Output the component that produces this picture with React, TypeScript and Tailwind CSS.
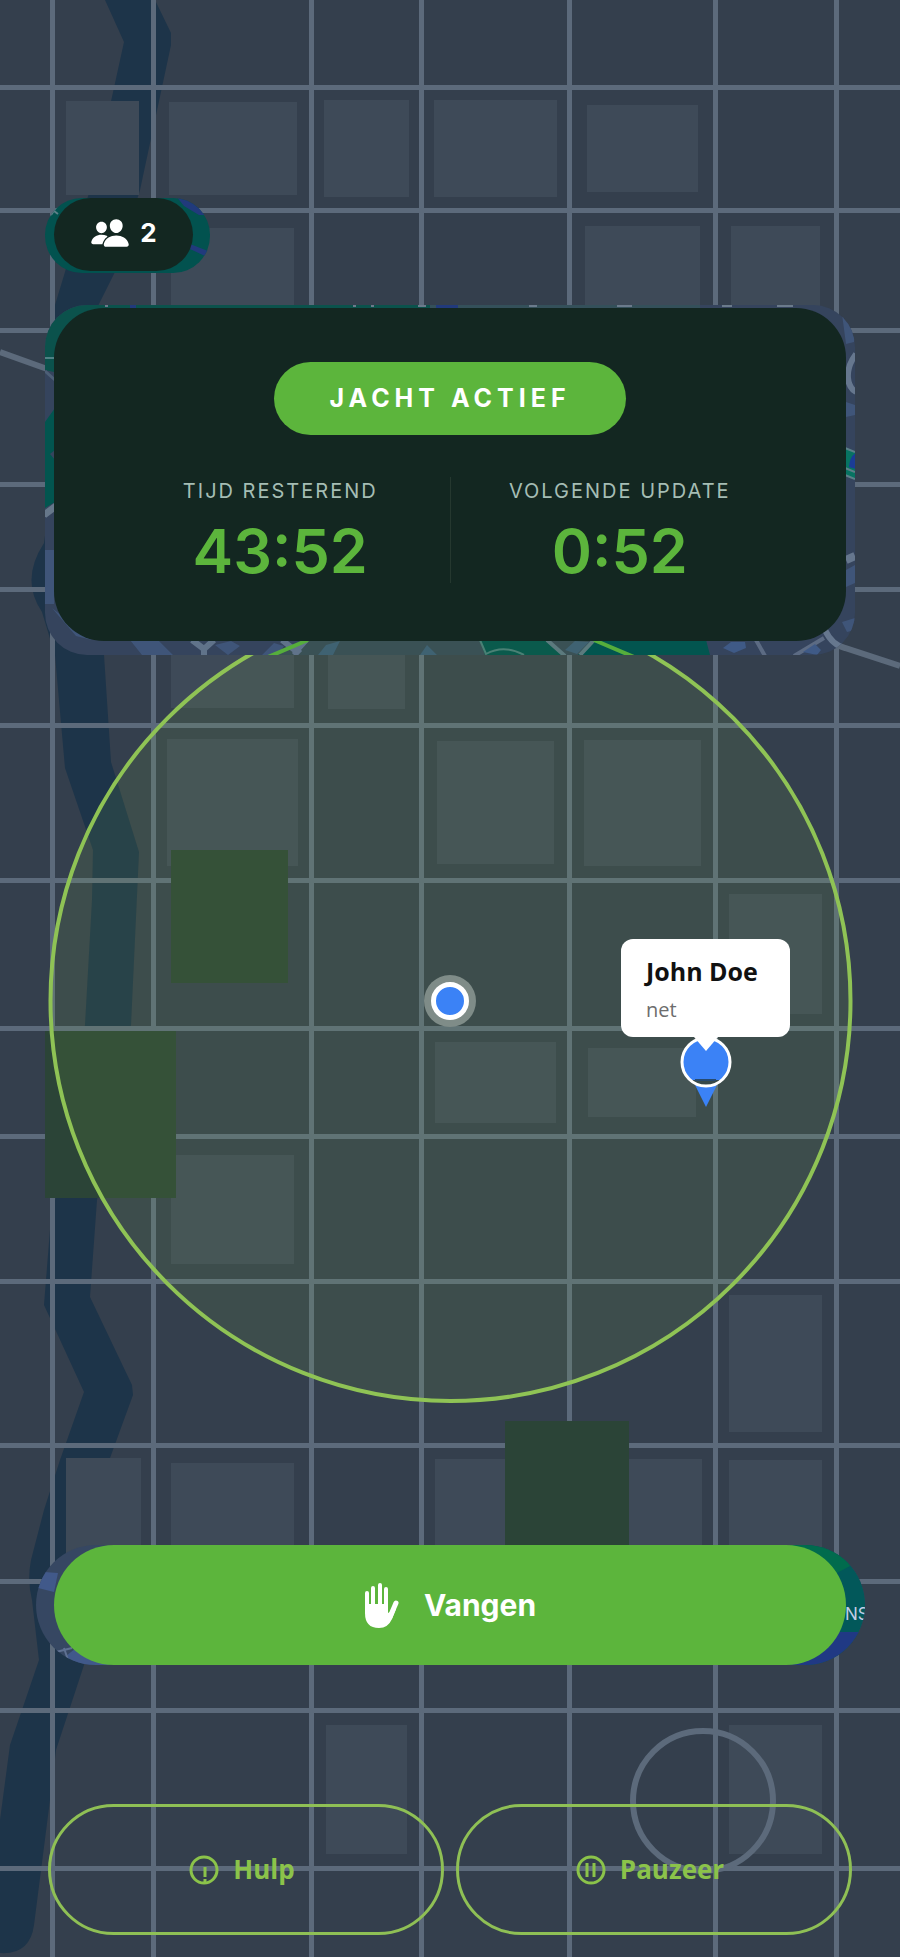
import { IoPeople } from 'react-icons/io5';

type Rect = [x: number, y: number, w: number, h: number];

const verticalRoads = [52, 153, 311, 421, 569, 715, 836];
const horizontalRoads = [87, 210, 330, 484, 589, 725, 880, 1028, 1136, 1281, 1445, 1581, 1710, 1868];

const buildings: Rect[] = [
  [66, 101, 73, 94],
  [169, 102, 128, 93],
  [324, 100, 85, 97],
  [434, 100, 123, 97],
  [587, 105, 111, 87],
  [171, 228, 123, 100],
  [585, 226, 115, 100],
  [731, 226, 89, 100],
  [171, 607, 123, 101],
  [328, 607, 77, 102],
  [167, 739, 131, 127],
  [437, 741, 117, 123],
  [584, 740, 117, 126],
  [729, 894, 93, 120],
  [435, 1042, 121, 81],
  [588, 1048, 108, 69],
  [171, 1155, 123, 109],
  [729, 1295, 93, 137],
  [66, 1458, 75, 104],
  [171, 1463, 123, 104],
  [435, 1459, 267, 104],
  [729, 1460, 93, 104],
  [326, 1725, 81, 129],
  [729, 1725, 93, 129],
];

const parks: Rect[] = [
  [171, 850, 117, 133],
  [45, 1031, 131, 167],
  [505, 1421, 124, 180],
];

function Rects({ items, fill }: { items: Rect[]; fill: string }) {
  return (
    <g fill={fill}>
      {items.map(([x, y, width, height]) => (
        <rect key={`${x}-${y}`} x={x} y={y} width={width} height={height} />
      ))}
    </g>
  );
}

function CityMap() {
  return (
    <svg
      viewBox="0 0 900 1957"
      preserveAspectRatio="xMidYMin slice"
      className="absolute inset-0 h-full w-full"
      aria-hidden="true"
    >
      <defs>
        <clipPath id="pill-edge">
          <rect x="45" y="198" width="165" height="75" rx="37" />
        </clipPath>
        <clipPath id="panel-edge">
          <rect x="45" y="305" width="810" height="350" rx="42" />
        </clipPath>
        <clipPath id="action-edge">
          <rect x="36" y="1545" width="829" height="120" rx="60" />
        </clipPath>
      </defs>

      <rect width="900" height="1957" fill="#343f4d" />

      {/* River */}
      <path
        d="M105 0 L124 42 L96 170 L65 272 L55 305 L50 500 L44 543 Q20 580 42 612 L55 655 L65 768 L93 850 L92 900 L85 1025 L50 1230 L44 1305 L84 1392 L60 1460 L44 1510 L31 1560 Q27 1580 32 1600 L39 1660 L10 1745 L0 1820 V1953 Q30 1955 34 1925 L50 1800 L56 1750 L84 1665 L74 1590 L110 1458 L133 1395 L132 1385 L90 1297 L97 1200 L131 1025 L139 852 L111 762 L104 655 L100 500 L98 306 L115 272 L140 190 L171 45 L171 33 L155 0 Z"
        fill="#1d3449"
      />

      <Rects items={buildings} fill="#3e4a58" />

      {/* Roads */}
      <g stroke="#5c6a7b" strokeWidth="5" fill="none">
        {horizontalRoads.map(y => <line key={y} x1="0" x2="900" y1={y + 0.5} y2={y + 0.5} />)}
        {verticalRoads.map(x => <line key={x} x1={x + 0.5} x2={x + 0.5} y1="0" y2="1957" />)}
        <path d="M0 352 L50 370 M825 630 Q832 645 845 648 L900 666" strokeWidth="6" />
        <circle cx="703" cy="1801" r="70" strokeWidth="6" />
      </g>

      <Rects items={parks} fill="#2b4437" />

      {/* Search area */}
      <circle cx="450.5" cy="1001" r="400" fill="#8bc34a" fillOpacity="0.11" stroke="#8fc355" strokeWidth="4" />

      {/* Map detail around the player pill */}
      <g clipPath="url(#pill-edge)">
        <rect x="45" y="198" width="165" height="75" fill="#02524f" />
        <path d="M176 196 H208 V215 H199 L184 206 Z" fill="#213a7c" />
        <path d="M190 244 L208 251 L205 256 L190 249 Z" fill="#213a7c" />
        <path d="M50 208 L58 214 M57 206 L51 215" stroke="#5c8088" strokeWidth="2" />
      </g>

      {/* Map detail around the status panel */}
      <g clipPath="url(#panel-edge)">
        <rect x="45" y="305" width="810" height="350" fill="#35445d" />
        <path d="M200 305 H700 V310 H200 Z" fill="#34505a" />
        <path d="M45 305 H430 V310 H120 L54 372 L45 370 Z" fill="#0b524c" />
        <path d="M45 422 L55 408 V450 L50 454 L55 460 V502 L45 508 Z" fill="#02554f" />
        <path d="M436 305 h22 v3 h-22 Z M130 305 h6 v3 h-6 Z" fill="#213a7c" />
        <path d="M105 306 h3 M353 306 h3 M371 306 h3 M418 306 h8 M529 306 h8 M617 306 h15 M722 306 h10 M777 306 h16" stroke="#6b7b8c" strokeWidth="2" />
        <path d="M45 358 H54" stroke="#4f8285" strokeWidth="2" />
        <path d="M45 371 L55 380" stroke="#4d5f76" strokeWidth="3" />
        <path d="M44 515 L56 506" stroke="#66778a" strokeWidth="7" />
        <path d="M45 550 H54 V604 H45 Z M52 608 L92 640 L76 636 Z" fill="#3f5579" />
        <path d="M842 314 Q856 330 854 342 L846 344 Z M846 402 l9 3 v10 l-9 2 Z M846 570 l9 -5 v18 l-9 4 Z M842 622 l13 -4 v12 l-8 2 Z" fill="#3f5579" />
        <path d="M856 354 Q847 366 848 378 Q849 388 856 392" stroke="#66778e" strokeWidth="6" fill="none" />
        <path d="M845 448 L855 452 V479 L845 475 Z" fill="#077362" />
        <path d="M849 467 Q850 456 856 453 V469 Z" fill="#1b3c96" />
        <path d="M845 448 L855 452 M845 468 L855 472 M845 475 L855 479" stroke="#5c8088" strokeWidth="2" />
        <path d="M846 560 L855 556" stroke="#66778e" strokeWidth="8" />

        <path d="M310 640 H590 L580 655 H270 Z" fill="#3a5155" />
        <path d="M130 640 H158 L173 655 H142 Z M215 645 l16 -4 9 5 -12 9 Z M262 655 l12 -12 10 3 -6 9 Z" fill="#3f5579" />
        <path d="M318 655 l8 -10 14 -4 -7 14 Z M420 655 l7 -10 10 10 Z M565 650 l10 -9 14 1 -12 12 Z" fill="#3f6272" />
        <path d="M480 640 H546 L563 655 H485 Z" fill="#0a5a4c" />
        <path d="M592 640 H706 L710 655 H578 Z" fill="#02554f" />
        <path d="M192 640 L204 649 L214 640 M204 648 V655 M282 640 L296 651 L306 640 M294 655 L300 649" stroke="#60738a" strokeWidth="6" fill="none" />
        <path d="M547 640 L565 656 M594 640 L580 655" stroke="#5c7a7e" strokeWidth="4" />
        <path d="M480 640 L486 654 Q504 644 524 655" stroke="#4a8075" strokeWidth="2" fill="none" />
        <path d="M756 640 L765 656 M794 656 L824 638" stroke="#5c6b83" strokeWidth="4" />
        <path d="M723 648 l8 -6 h14 l1 6 -12 5 Z M803 652 l12 -8 6 6 -4 5 Z" fill="#3f5a86" />
        <path d="M825 630 Q832 645 845 648 L858 652" stroke="#66778e" strokeWidth="6" fill="none" />
        <path d="M268 657 L308 640 M594 640 L634 657" stroke="#56ae3c" strokeWidth="4" />
      </g>

      {/* Map detail around the catch button */}
      <g clipPath="url(#action-edge)">
        <rect x="36" y="1545" width="829" height="120" fill="#364762" />
        <path d="M44 1572 L58 1573 L54 1592 L38 1588 Z M66 1656 L76 1648 L110 1665 H75 Z" fill="#41598a" />
        <path d="M56 1652 L72 1648 M64 1648 L68 1660" stroke="#5f7192" strokeWidth="2" />
        <rect x="790" y="1545" width="75" height="120" fill="#02585a" />
        <path d="M790 1545 H835 Q848 1556 850 1566 L835 1574 Z" fill="#016b4d" />
        <path d="M790 1665 L838 1632 H865 V1665 Z" fill="#203984" />
        <text x="845" y="1620" fontSize="17" fill="#c3cde6" className="font-[Inter]">NS</text>
      </g>
    </svg>
  );
}

function Timer({ label, value }: { label: string; value: string }) {
  return (
    <div className="flex flex-1 flex-col items-center">
      <span className="text-[20px] leading-7 tracking-[2px] text-[#a5bdb4]">{label}</span>
      <span className="mt-[14px] text-[61px] leading-[64px] font-semibold text-[#5cb53c]">{value}</span>
    </div>
  );
}

function PlayerMarker({ name, team }: { name: string; team: string }) {
  return (
    <div className="absolute top-[939px] left-1/2 ml-[171px] flex w-[169px] flex-col items-center font-['Open_Sans','Noto_Sans',sans-serif]">
      <div className="relative z-10 w-full rounded-xl bg-white px-[25px] pt-4 pb-3">
        <p className="text-[25px] leading-8 font-bold whitespace-nowrap text-[#111]">{name}</p>
        <p className="mt-2 text-[20px] leading-[30px] text-[#6d6d6d]">{team}</p>
        <svg viewBox="0 0 24 14" className="absolute top-full left-1/2 h-[14px] w-6 -translate-x-1/2" aria-hidden="true">
          <path d="M0 0 H24 L12 14 Z" fill="white" />
        </svg>
      </div>
      <svg viewBox="0 0 52 72" className="h-[72px] w-[52px]" aria-hidden="true">
        <path d="M14 46 H38 L26 70 Z" fill="#3b82f6" />
        <circle cx="26" cy="25" r="24" fill="#3b82f6" />
        <path d="M10 43 H42 Q36 49 26 49 Q16 49 10 43 Z" fill="#37494a" />
        <path d="M15 43 H36" stroke="#264a70" strokeWidth="2" />
        <circle cx="26" cy="25" r="24" fill="none" stroke="white" strokeWidth="3" />
      </svg>
    </div>
  );
}

function HandIcon() {
  return (
    <svg viewBox="0 0 36 46" className="h-[46px] w-9" fill="none" stroke="white" strokeLinecap="round" aria-hidden="true">
      <path d="M3 11 V30 M9 6 V30 M16 3 V30 M22 7 V30" strokeWidth="4" />
      <path d="M32 21 L26 35" strokeWidth="5" />
      <path d="M1 22 H24 V31 L26 30 L30 24 L32 27 L28 37 Q24 46 15 46 Q1 46 1 31 Z" fill="white" stroke="none" />
    </svg>
  );
}

function HelpIcon() {
  return (
    <svg viewBox="0 0 30 30" className="size-[30px]" fill="none" stroke="currentColor" aria-hidden="true">
      <circle cx="15" cy="15" r="13" strokeWidth="3" />
      <path d="M16 12 V22 M16 24 V27" strokeWidth="3" />
    </svg>
  );
}

function PauseIcon() {
  return (
    <svg viewBox="0 0 30 30" className="size-[30px]" fill="none" stroke="currentColor" aria-hidden="true">
      <circle cx="15" cy="15" r="13" strokeWidth="3" />
      <path d="M11 8 V22 M18 8 V22" strokeWidth="3" />
    </svg>
  );
}

export default function App() {
  return (
    <main className="relative flex min-h-screen flex-col overflow-hidden bg-[#343f4d] pt-[198px] pb-[22px] font-[Inter,sans-serif]">
      <CityMap />

      {/* Own position */}
      <div className="absolute top-[975px] left-1/2 flex size-[52px] -translate-x-1/2 items-center justify-center rounded-full bg-[#7f8c88]">
        <div className="size-[38px] rounded-full border-5 border-white bg-[#3b82f6]" />
      </div>
      <PlayerMarker name="John Doe" team="net" />

      <div className="relative px-[54px]">
        <div className="flex h-[73px] w-[139px] items-center justify-center gap-[10px] rounded-full bg-[#132721] pb-1 text-white">
          <IoPeople className="size-10" aria-label="Spelers" />
          <span className="text-[26px] font-bold">2</span>
        </div>

        <section className="mt-[37px] flex flex-col items-center rounded-[50px] bg-[#132721] pt-[54px] pb-[58px]">
          <h1 className="flex h-[73px] w-[352px] items-center justify-center rounded-full bg-[#5cb53c] text-[25px] font-bold tracking-[5px] text-white">
            JACHT ACTIEF
          </h1>
          <div className="mt-[42px] flex w-full px-[57px]">
            <Timer label="TIJD RESTEREND" value="43:52" />
            <div className="w-px bg-[#25382f]" />
            <Timer label="VOLGENDE UPDATE" value="0:52" />
          </div>
        </section>
      </div>

      <div className="relative mt-auto px-[54px]">
        <button className="flex h-[120px] w-full items-center justify-center gap-6 rounded-full bg-[#5cb53c] text-[30px] font-bold text-white">
          <HandIcon />
          Vangen
        </button>
      </div>

      <div className="relative mt-[139px] grid grid-cols-2 gap-3 px-12 font-['Open_Sans','Noto_Sans',sans-serif] text-[26px] font-bold text-[#8bc34a]">
        <button className="flex h-[131px] items-center justify-center gap-[14px] rounded-full border-3 border-[#8fc055] pr-2">
          <HelpIcon />
          Hulp
        </button>
        <button className="flex h-[131px] items-center justify-center gap-[14px] rounded-full border-3 border-[#8fc055] pr-2">
          <PauseIcon />
          Pauzeer
        </button>
      </div>
    </main>
  );
}
